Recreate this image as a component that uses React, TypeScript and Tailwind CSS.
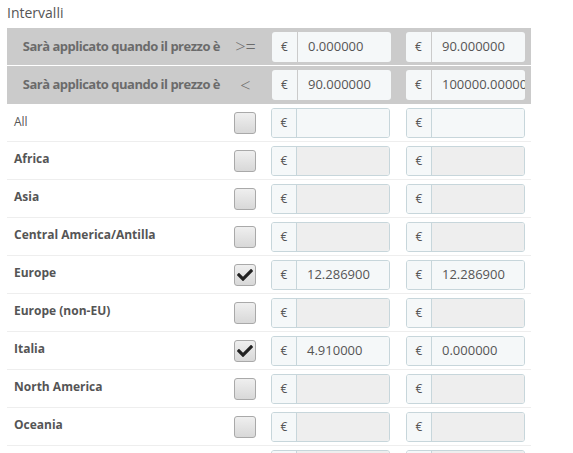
import { FaCheck } from "react-icons/fa";

const font = { fontFamily: '"Open Sans", "Liberation Sans", sans-serif' };

type Zone = { name: string; bold: boolean; checked: boolean; min?: string; max?: string; light?: boolean };

const zones: Zone[] = [
  { name: "All", bold: false, checked: false, light: true },
  { name: "Africa", bold: true, checked: false },
  { name: "Asia", bold: true, checked: false },
  { name: "Central America/Antilla", bold: true, checked: false },
  { name: "Europe", bold: true, checked: true, min: "12.286900", max: "12.286900" },
  { name: "Europe (non-EU)", bold: true, checked: false },
  { name: "Italia", bold: true, checked: true, min: "4.910000", max: "0.000000" },
  { name: "North America", bold: true, checked: false },
  { name: "Oceania", bold: true, checked: false },
];

function PriceInput({
  value,
  enabled,
  flat,
  blank,
}: {
  value?: string;
  enabled: boolean;
  flat?: boolean;
  blank?: boolean;
}) {
  return (
    <div
      className={`flex h-[30px] w-[119px] overflow-hidden rounded-[3px] ${
        flat ? "" : "border border-[#c7d6db]"
      }`}
    >
      <div
        className={`flex w-[25px] shrink-0 items-center justify-center bg-[#f5f8f9] text-[12px] text-[#555] ${
          flat ? "" : "border-r border-[#c7d6db]"
        }`}
      >
        {!blank && "€"}
      </div>
      <div
        className={`flex flex-1 items-center overflow-hidden whitespace-nowrap pl-[10px] text-[13px] text-[#555] ${
          flat ? "ml-[1px] bg-[#f5f8f9]" : enabled ? "bg-[#f5f8f9]" : "bg-[#eeeeee]"
        }`}
      >
        {value}
      </div>
    </div>
  );
}

function Checkbox({ checked }: { checked: boolean }) {
  return (
    <div className="flex h-[22px] w-[22px] items-center justify-center rounded-[3px] border border-[#a9a9a9] bg-gradient-to-b from-[#efefef] to-[#d8d8d8]">
      {checked && <FaCheck className="h-[16px] w-[16px] text-[#222]" />}
    </div>
  );
}

export default function App() {
  const header = [
    { op: ">=", min: "0.000000", max: "90.000000" },
    { op: "<", min: "90.000000", max: "100000.000000" },
  ];

  return (
    <div className="h-[453px] w-[573px] overflow-hidden bg-white" style={font}>
      <div className="pl-[7px] pt-[3px] text-[14px] leading-[20px] text-[#555]">Intervalli</div>

      <div className="ml-[7px] mt-[5px] w-[524px]">
        {header.map((h, i) => (
          <div
            key={h.op}
            className={`grid h-[38px] grid-cols-[218px_39px_134px_133px] items-center bg-[#cbcbcb] ${
              i === 0 ? "border-b border-white" : "h-[37px]"
            }`}
          >
            <div className="pr-[5px] text-right text-[13px] font-bold tracking-[-0.5px] text-[#6b6b6b]">
              Sarà applicato quando il prezzo è
            </div>
            <div className="pl-[2px] text-center text-[18px] font-light text-[#6b6b6b]">{h.op}</div>
            <div className="pl-[8px]">
              <PriceInput value={h.min} enabled flat />
            </div>
            <div className="pl-[8px]">
              <PriceInput value={h.max} enabled flat />
            </div>
          </div>
        ))}

        {zones.map((z) => (
          <div
            key={z.name}
            className="grid h-[38px] grid-cols-[218px_39px_134px_133px] items-center border-b border-[#eeeeee]"
          >
            <div
              className={`self-start pl-[7px] text-[12px] text-[#555] ${
                z.bold ? "pt-[8px] font-bold" : "pt-[9px] font-normal"
              }`}
            >
              {z.name}
            </div>
            <div className="flex justify-center pl-[1px]">
              <Checkbox checked={z.checked} />
            </div>
            <div className="pl-[7px]">
              <PriceInput value={z.min} enabled={z.checked || !!z.light} />
            </div>
            <div className="pl-[8px]">
              <PriceInput value={z.max} enabled={z.checked || !!z.light} />
            </div>
          </div>
        ))}

        {/* next row, only its top edge is in view */}
        <div className="grid h-[38px] grid-cols-[218px_39px_134px_133px] items-center">
          <div />
          <div />
          <div className="pl-[7px]">
            <PriceInput enabled={false} blank />
          </div>
          <div className="pl-[8px]">
            <PriceInput enabled={false} blank />
          </div>
        </div>
      </div>
    </div>
  );
}
